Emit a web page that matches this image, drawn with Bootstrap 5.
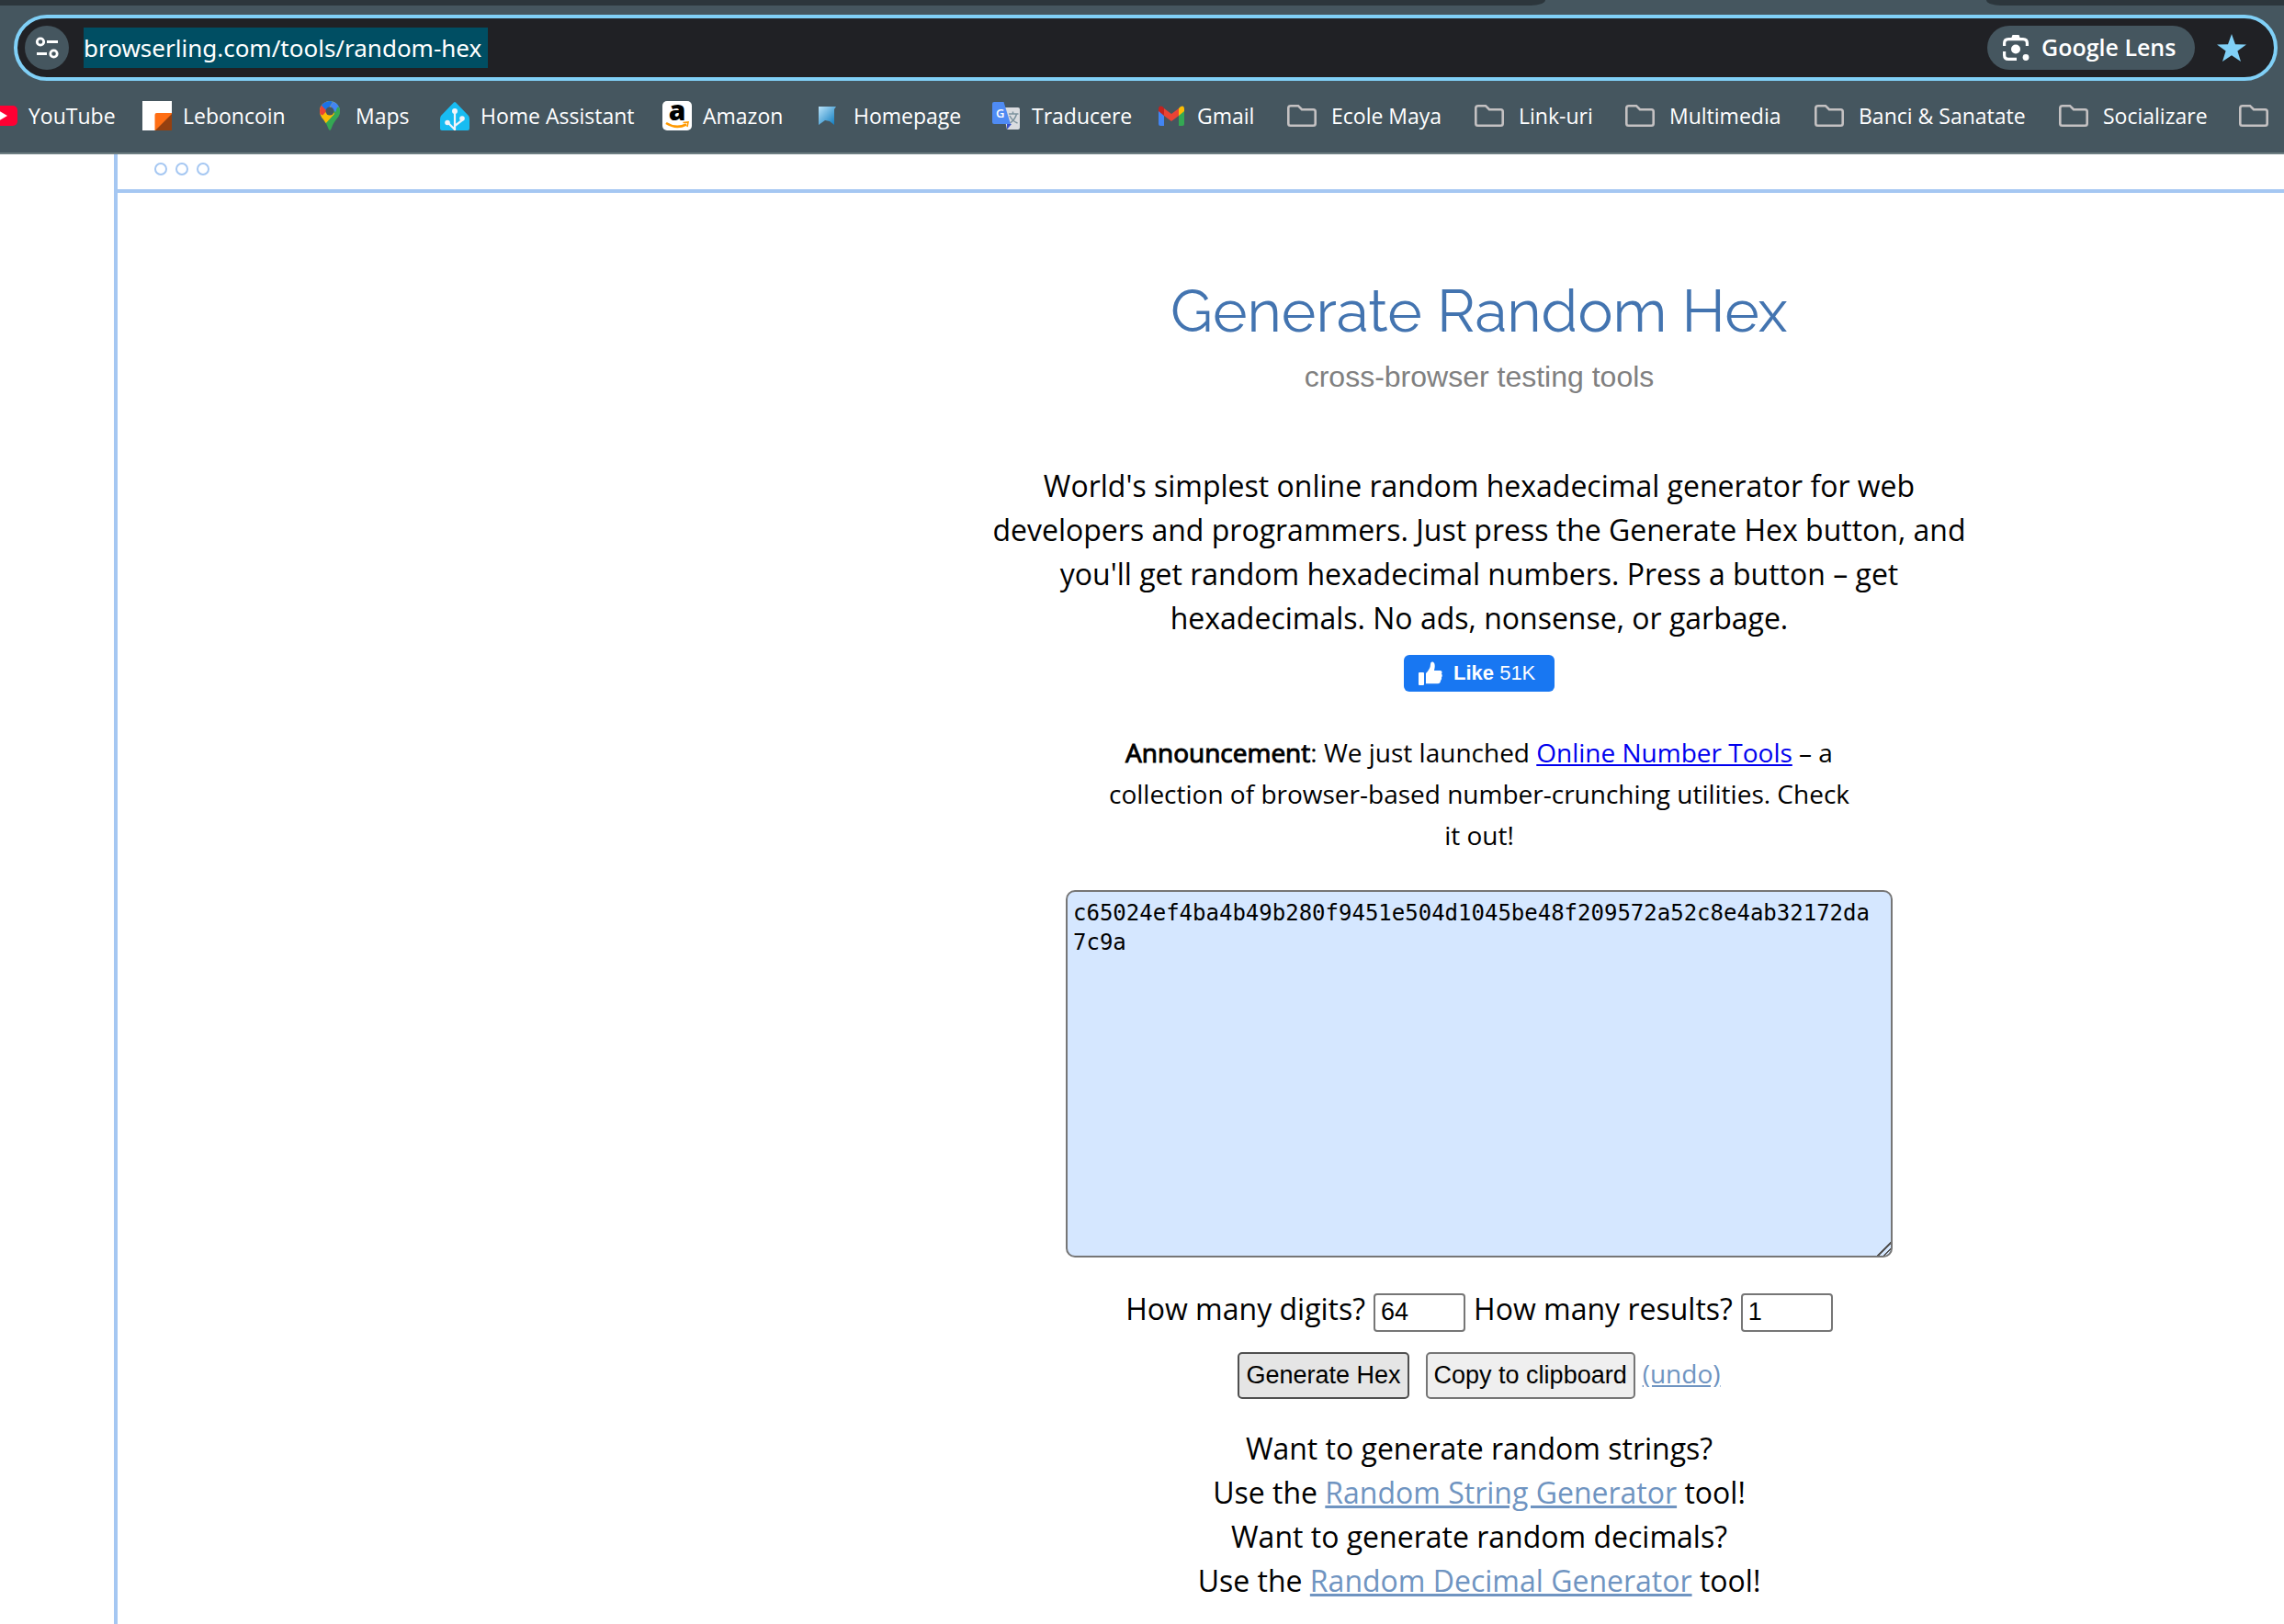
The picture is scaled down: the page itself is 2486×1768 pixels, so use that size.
<!DOCTYPE html>
<html lang="en">
<head>
<meta charset="utf-8">
<meta name="viewport" content="width=device-width, initial-scale=1">
<title>Generate Random Hex</title>
<link rel="stylesheet" href="https://cdn.jsdelivr.net/npm/bootstrap@5.3.0/dist/css/bootstrap.min.css">
<style>
:root { --chrome: #45565f; --strip: #2c363c; --accent: #80d0f7; --frame: #a5c7f2; --soft-link: #6f94c1; }
body { font-family: "Open Sans", sans-serif; color: #000; background: #fff; overflow-x: hidden; }
.chrome-bar { background: var(--chrome); color: #fff; border-bottom: 2px solid #6d7e82; }
.tab-strip { height: 6px; }
.tab-strip div { background: var(--strip); }
.tabs-before { flex: 0 0 1682px; border-bottom-right-radius: 16px 6px; }
.tabs-gap { flex: 0 0 480px; }
.tab-strip .tabs-gap { background: var(--chrome); }
.tabs-after { flex: 1 1 0; border-bottom-left-radius: 16px 6px; }
.omnibox { height: 72px; margin: 10px 7px 0 15px; border: 4px solid var(--accent); border-radius: 36px; background: #202125; padding: 0 12px 0 8px; }
.site-info { width: 48px; height: 48px; border: 0; padding: 0; border-radius: 24px; background: var(--chrome); }
.url-box { width: 440px; height: 44px; margin-left: 16px; padding: 0; border: 0; background: #004e63; color: #fff; font-family: "Noto Sans", sans-serif; font-size: 26px; }
.lens-btn { height: 48px; border: 0; border-radius: 24px; background: var(--chrome); color: #fff; font-size: 25px; font-weight: 600; width: 226px; padding: 0 0 0 15px; gap: 12px; }
.star-btn { border: 0; background: none; padding: 0; width: 32px; height: 32px; margin: 0 18px 0 24px; }
.bookmarks { height: 78px; padding-bottom: 2px; margin-left: -13px; display: grid; grid-template-columns: 168px 188px 136px 242px 164px 194px 180px 142px 204px 164px 206px 266px 196px 1fr; overflow: hidden; }
.bookmarks a { color: #fff; text-decoration: none; font-size: 23px; white-space: nowrap; gap: 12px; }
.bookmarks a.folder-link { gap: 16px; }
.bookmarks svg { flex: none; }
.site-frame { margin-left: 124px; border-left: 4px solid var(--frame); }
.frame-top { height: 42px; border-bottom: 4px solid var(--frame); padding: 8px 0 0 40px; gap: 9px; }
.frame-top span { width: 14px; height: 14px; border: 2px solid var(--frame); border-radius: 50%; margin-top: 1px; }
.tool-area { padding: 89px 0 16px 606px; font-size: 32px; line-height: 48px; }
.tool-title { font-family: Raleway, Lato, sans-serif; font-size: 64px; line-height: 80px; font-weight: 400; color: #4374b0; margin: 0 0 7px; }
.tool-sub { font-family: "Liberation Sans", sans-serif; color: #808080; margin: 0 0 71px; }
.tool-intro { width: 1100px; margin: 0 0 16px; }
.like-btn { width: 164px; height: 40px; border: 0; border-radius: 6px; background: #1877f2; color: #fff; font: 22px/40px "Liberation Sans", sans-serif; gap: 12px; padding: 0 0 0 16px; }
.news { width: 820px; font-size: 28px; line-height: 45px; margin: 44px 0 37px; }
.news b { font-weight: 400; -webkit-text-stroke: 1px #000; }
.news a { color: #00e; }
.hex-out { width: 900px; height: 400px; border: 2px solid #767676; border-radius: 10px; background: #d5e7ff; color: #000; padding: 7px 12px 7px 6px; font: 24px/32px "DejaVu Sans Mono", monospace; resize: both; word-break: break-all; margin-bottom: 32px; }
.hex-out::-webkit-resizer { background: linear-gradient(135deg, transparent 50%, #555 50%, #555 57%, transparent 57%, transparent 72%, #555 72%, #555 79%, transparent 79%); }
.num-row { gap: 9px; margin-bottom: 22px; height: 48px; }
.num-in { width: 100px; height: 42px; border: 2px solid #767676; border-radius: 4px; padding: 0 6px; font: 27px/38px "Liberation Sans", sans-serif; color: #000; background: #fff; }
.tool-btn { height: 51px; border: 2px solid #767676; border-radius: 5px; background: #efefef; color: #000; padding: 0 7px; font: 27px/47px "Liberation Sans", sans-serif; }
.tool-btn.hot { border-color: #4f4f4f; background: #e5e5e5; margin-right: 18px; }
.btn-row { margin-bottom: 30px; }
.undo-link { margin-left: 8px; font-size: 28px; }
.soft-link { color: var(--soft-link); }
</style>
<script src="https://cdn.jsdelivr.net/npm/bootstrap@5.3.0/dist/js/bootstrap.bundle.min.js"></script>
</head>
<body class="d-flex flex-column min-vh-100">
<svg width="0" height="0" class="position-absolute" aria-hidden="true">
  <symbol id="folder" viewBox="0 0 32 32"><path d="M4 5.2H12L16 9.2H28.5Q30.7 9.2 30.7 11.4V24.6Q30.7 26.8 28.5 26.8H3.5Q1.3 26.8 1.3 24.6V7.4Q1.3 5.2 4 5.2Z" fill="none" stroke="#c4c1c2" stroke-width="2.6"/></symbol>
</svg>

<header class="chrome-bar">
  <div class="tab-strip d-flex"><div class="tabs-before"></div><div class="tabs-gap"></div><div class="tabs-after"></div></div>
  <div class="omnibox d-flex align-items-center">
    <button class="site-info d-flex align-items-center justify-content-center" type="button" aria-label="Site information">
      <svg width="28" height="28" viewBox="0 0 28 28" fill="none" stroke="#fff" stroke-width="2.8"><circle cx="7" cy="7.5" r="3.7"/><path d="M14 7.5H26M3 20.5H14"/><circle cx="21.500" cy="20.500" r="3.700"/></svg>
    </button>
    <input class="url-box" type="text" aria-label="Address" value="browserling.com/tools/random-hex">
    <button class="lens-btn d-flex align-items-center ms-auto" type="button">
      <svg width="32" height="32" viewBox="0 0 32 32" fill="none" stroke="#fff" stroke-width="3.200"><path d="M3.600 14V11Q3.600 6.600 8 6.600H24Q28.400 6.600 28.400 11V14M3.600 20V24Q3.600 28.400 8 28.400H17"/><path d="M11 6L12.500 2H19.500L21 6Z" fill="#fff" stroke="none"/><circle cx="16" cy="17.500" r="5" fill="#fff" stroke="none"/><circle cx="27" cy="26.500" r="3.400" fill="#fff" stroke="none"/></svg>
      <span>Google Lens</span>
    </button>
    <button class="star-btn d-flex" type="button" aria-label="Bookmarked">
      <svg width="32" height="32" viewBox="0 0 32 32"><path d="M16 1L20 12.200L32 12.500L22.400 19.500L26 31L16 24.200L6 31L9.600 19.500L0 12.500L12 12.200Z" fill="#80d0f7"/></svg>
    </button>
  </div>
  <nav class="bookmarks" aria-label="Bookmarks">
    <a class="d-flex align-items-center" href="#"><svg width="32" height="32" viewBox="0 0 32 32"><rect y="5" width="32" height="22" rx="5" fill="#ff0033"/><path d="M12.500 11L21 16L12.500 21Z" fill="#fff"/></svg>YouTube</a>
    <a class="d-flex align-items-center" href="#"><svg width="32" height="32" viewBox="0 0 32 32"><path d="M0 0H32V32H0Z" fill="#fff"/><path d="M13.500 32V15Q13.500 13 15.500 13H32V32Z" fill="#ff6e14"/><path d="M32 14V32H14Z" fill="#954010"/></svg>Leboncoin</a>
    <a class="d-flex align-items-center" href="#"><svg width="32" height="32" viewBox="0 0 32 32"><clipPath id="pin"><path d="M16 0C9.500 0 5 5 5 11C5 18 11 20 14 29Q15 32 16 32T18 29C21 20 27 18 27 11C27 5 22.500 0 16 0Z"/></clipPath><g clip-path="url(#pin)"><path d="M0 0H32V32H0Z" fill="#34a853"/><path d="M0 0H20L24 2L10 18L4 22L0 12Z" fill="#fbbc04"/><path d="M0 0H12L16 7L9 16L3 13Z" fill="#ea4335"/><path d="M5 3L13 -2H21L16 6L12 10Z" fill="#1a73e8"/><path d="M20 0L30 6L28 12L22 12L16 6Z" fill="#4285f4"/><path d="M24 7L30 5V18H20Z" fill="#34a853"/><path d="M5 19L17 6L21 14L10 26Z" fill="#fbbc04"/></g><circle cx="16" cy="11" r="4.500" fill="#45565f"/></svg>Maps</a>
    <a class="d-flex align-items-center" href="#"><svg width="32" height="32" viewBox="0 0 32 32"><path d="M16 1Q17 1 18 2.500L31 16Q32 17.500 32 20V30Q32 32 30 32H2Q0 32 0 30V20Q0 17.500 1 16L14 2.500Q15 1 16 1Z" fill="#18bcf2"/><g stroke="#f2f4f9" stroke-width="2.200" fill="none"><path d="M16 12V32M8 23L16 31M24 19V21L16 27"/></g><g fill="#f2f4f9"><circle cx="16" cy="11" r="3"/><circle cx="8" cy="23.500" r="2.800"/><circle cx="24" cy="19" r="2.800"/></g></svg>Home Assistant</a>
    <a class="d-flex align-items-center" href="#"><svg class="overflow-visible" width="32" height="32" viewBox="0 0 32 32"><rect width="32" height="32" rx="5" fill="#fff"/><text x="16" y="21" text-anchor="middle" font-family="Open Sans, sans-serif" font-weight="800" font-size="30" fill="#000">a</text><path d="M4 24Q15 31 26 25.500" fill="none" stroke="#f90" stroke-width="2.600"/><path d="M22.500 23.500L28 23L27 28" fill="none" stroke="#f90" stroke-width="1.600"/></svg>Amazon</a>
    <a class="d-flex align-items-center" href="#"><svg width="32" height="32" viewBox="0 0 32 32"><linearGradient id="flag" x1="0" y1="0" x2="1" y2="1"><stop offset="0" stop-color="#b9e3fa"/><stop offset="1" stop-color="#0878bd"/></linearGradient><path d="M6 6H25L23 9V26L18 22L13 21L6 26Z" fill="url(#flag)"/></svg>Homepage</a>
    <a class="d-flex align-items-center" href="#"><svg width="32" height="32" viewBox="0 0 32 32"><path d="M12 7H29Q31 7 31 9V29Q31 31 29 31H17Z" fill="#dadce0"/><path d="M17 25H22L17 31Z" fill="#3650c7"/><path d="M3 1H13.500L21 25H3Q1 25 1 23V3Q1 1 3 1Z" fill="#4f8bf3"/><text x="5" y="18" font-family="Open Sans, sans-serif" font-weight="600" font-size="13" fill="#fff">G</text><path d="M19 14H29.500M23.500 11.500V14M27.500 14Q26 20 20.500 24M20 16Q23 22 28.500 24" fill="none" stroke="#7d939e" stroke-width="1.500"/></svg>Traducere</a>
    <a class="d-flex align-items-center" href="#"><svg width="32" height="32" viewBox="0 0 32 32"><path d="M2 9L8 13V27H4Q2 27 2 25Z" fill="#4285f4"/><path d="M24 13L30 9V25Q30 27 28 27H24Z" fill="#34a853"/><path d="M24 8L26 6Q30 4 30 9V11L24 16Z" fill="#fbbc04"/><path d="M2 9Q2 4 6.500 6L8 8V16L2 11Z" fill="#c5221f"/><path d="M8 8L16 14L24 8V16L16 22L8 16Z" fill="#ea4335"/></svg>Gmail</a>
    <a class="folder-link d-flex align-items-center" href="#"><svg width="32" height="32"><use href="#folder"/></svg>Ecole Maya</a>
    <a class="folder-link d-flex align-items-center" href="#"><svg width="32" height="32"><use href="#folder"/></svg>Link-uri</a>
    <a class="folder-link d-flex align-items-center" href="#"><svg width="32" height="32"><use href="#folder"/></svg>Multimedia</a>
    <a class="folder-link d-flex align-items-center" href="#"><svg width="32" height="32"><use href="#folder"/></svg>Banci &amp; Sanatate</a>
    <a class="folder-link d-flex align-items-center" href="#"><svg width="32" height="32"><use href="#folder"/></svg>Socializare</a>
    <a class="folder-link d-flex align-items-center" href="#" aria-label="Folder"><svg width="32" height="32"><use href="#folder"/></svg></a>
  </nav>
</header>

<div class="site-frame flex-grow-1">
  <div class="frame-top d-flex"><span></span><span></span><span></span></div>
  <main class="tool-area d-flex flex-column align-items-center text-center">
    <h1 class="tool-title">Generate Random Hex</h1>
    <p class="tool-sub">cross-browser testing tools</p>
    <p class="tool-intro">World's simplest online random hexadecimal generator for web developers and programmers. Just press the Generate Hex button, and you'll get random hexadecimal numbers. Press a button – get hexadecimals. No ads, nonsense, or garbage.</p>
    <button class="like-btn d-flex align-items-center" type="button">
      <svg width="26" height="26" viewBox="0 0 26 26" fill="#fff"><rect x="0" y="12" width="6" height="14" rx="1"/><path d="M8 13Q13 8 13 3Q13 0 15.500 0.500Q19 2 17 10H24Q26.500 11 25 13.500Q26.500 15.500 25 17.500Q25.500 19.500 24 21Q24 24 21 24.300H8Z"/></svg>
      <span><b>Like</b> 51K</span>
    </button>
    <p class="news"><b>Announcement</b>: We just launched <a href="#">Online Number Tools</a> – a collection of browser-based number-crunching utilities. Check it out!</p>
    <textarea class="hex-out" aria-label="Generated hex" spellcheck="false">c65024ef4ba4b49b280f9451e504d1045be48f209572a52c8e4ab32172da7c9a</textarea>
    <div class="num-row d-flex align-items-baseline">
      <label for="digits">How many digits?</label><input class="num-in" id="digits" type="text" value="64">
      <label for="results">How many results?</label><input class="num-in" id="results" type="text" value="1">
    </div>
    <div class="btn-row d-flex align-items-baseline">
      <button class="tool-btn hot" type="button">Generate Hex</button>
      <button class="tool-btn" type="button">Copy to clipboard</button>
      <a class="undo-link soft-link" href="#">(undo)</a>
    </div>
    <p class="m-0">Want to generate random strings?<br>Use the <a class="soft-link" href="#">Random String Generator</a> tool!<br>Want to generate random decimals?<br>Use the <a class="soft-link" href="#">Random Decimal Generator</a> tool!</p>
  </main>
</div>
</body>
</html>
